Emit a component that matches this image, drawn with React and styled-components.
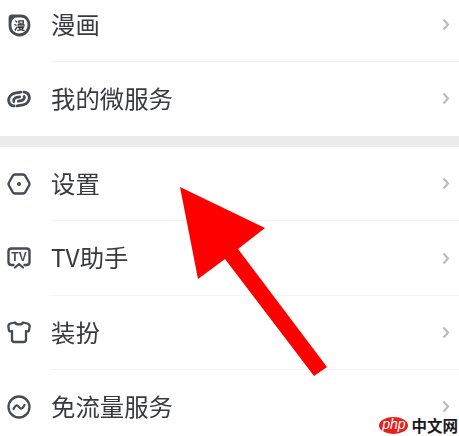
import React from "react";
import styled, { createGlobalStyle } from "styled-components";

const GlobalStyle = createGlobalStyle`
  html, body {
    margin: 0;
    padding: 0;
    background: #fff;
  }
  body {
    font-family: "Noto Sans CJK SC", "Noto Sans", sans-serif;
  }
`;

const Page = styled.div`
  position: relative;
  width: 459px;
  height: 436px;
  overflow: hidden;
  background: #fff;
`;

const List = styled.div`
  margin-top: -12px;
  filter: blur(0.35px);
`;

const Group = styled.div`
  background: #fff;
`;

const Band = styled.div`
  height: 11px;
  background: #ececec;
`;

const Row = styled.div`
  display: flex;
  align-items: center;
  height: ${(p) => p.$height}px;
  padding-left: 7px;
`;

const IconBox = styled.div`
  display: flex;
  align-items: center;
  justify-content: center;
  flex: none;
  width: 24px;
  height: 24px;
  margin-top: -1px;
  margin-right: 20px;
  color: #474c54;
`;

const RowBody = styled.div`
  flex: 1;
  display: flex;
  align-items: center;
  justify-content: space-between;
  align-self: stretch;
  padding-right: 8px;
  border-bottom: 1px solid ${(p) => (p.$last ? "transparent" : "#f3f3f3")};
`;

const Label = styled.span`
  font-size: 24.4px;
  line-height: 1;
  color: #383a3e;
  margin-top: -1px;
`;

const ChevronIcon = styled.svg`
  margin-right: 1px;
`;

const Arrow = styled.svg`
  position: absolute;
  left: 0;
  top: 0;
  pointer-events: none;
`;

const Watermark = styled.div`
  position: absolute;
  right: 1px;
  bottom: 2px;
  display: flex;
  align-items: center;
  gap: 3px;
`;

const PhpBadge = styled.div`
  width: 29px;
  height: 17px;
  border-radius: 50%;
  background: #e8201c;
  color: #fff;
  font-family: "Liberation Sans", sans-serif;
  font-style: italic;
  font-size: 14px;
  line-height: 15px;
  text-align: center;
`;

const WatermarkText = styled.span`
  font-size: 15.5px;
  line-height: 17px;
  font-weight: 700;
  color: #1a1a1a;
`;

const Chevron = () => (
  <ChevronIcon width="8" height="13" viewBox="0 0 8 13" fill="none">
    <path d="M1.5 1.5 L6 6.5 L1.5 11.5" stroke="#b9b9b9" strokeWidth="2" />
  </ChevronIcon>
);

const ComicIcon = () => (
  <svg width="24" height="24" viewBox="0 0 24 24" fill="none">
    <path
      d="M5 3 H14 C19 3 22 7 22 12 C22 17.5 18 22 12.5 22 C7 22 3 18 3 12.5 V5 C3 3.8 3.8 3 5 3 Z"
      stroke="#474c54"
      strokeWidth="2.8"
    />
    <path d="M4 4 H9 C6 5.5 4.5 8 4 11 Z" fill="#474c54" />
    <text x="12.5" y="16.5" textAnchor="middle" fontSize="11.5" fontWeight="700" fill="#33363b" fontFamily="Noto Sans CJK SC, sans-serif">
      漫
    </text>
  </svg>
);

const LinkIcon = () => (
  <svg width="24" height="24" viewBox="0 0 24 24" fill="none" stroke="currentColor" strokeWidth="2.8" strokeLinecap="round" strokeLinejoin="round">
    <g transform="rotate(-10 12 12)">
      <path d="M15 5.5 H9 C4.5 5.5 1.5 9 1.5 12.5 C1.5 15.5 3.5 17.5 6 18" />
      <path d="M9 18.5 H15 C19.5 18.5 22.5 15 22.5 11.5 C22.5 8.5 20.5 6.5 18 6" />
      <path d="M6.5 13.5 C6 11.5 8 10 10 10 H13" />
      <path d="M17.5 10.5 C18 12.5 16 14 14 14 H11" />
    </g>
  </svg>
);

const SettingsIcon = () => (
  <svg width="24" height="24" viewBox="0 0 24 24" fill="none">
    <path
      d="M8 2.5 H16 C17 2.5 17.8 3 18.3 3.8 L22 10.5 C22.6 11.5 22.6 12.5 22 13.5 L18.3 20.2 C17.8 21 17 21.5 16 21.5 H8 C7 21.5 6.2 21 5.7 20.2 L2 13.5 C1.4 12.5 1.4 11.5 2 10.5 L5.7 3.8 C6.2 3 7 2.5 8 2.5 Z"
      stroke="currentColor"
      strokeWidth="2.4"
    />
    <circle cx="12" cy="12" r="2" fill="currentColor" />
  </svg>
);

const TvIcon = () => (
  <svg width="24" height="24" viewBox="0 0 24 24" fill="none" stroke="currentColor" strokeLinecap="round" strokeLinejoin="round">
    <path d="M6.5 19 H4.5 C2.8 19 1.5 17.8 1.5 16 V5.5 C1.5 3.8 2.8 2.5 4.5 2.5 H19.5 C21.2 2.5 22.5 3.8 22.5 5.5 V16 C22.5 17.8 21.2 19 19.5 19 H17.5" strokeWidth="2.4" />
    <text x="12" y="15" textAnchor="middle" fontSize="12" fontWeight="700" fill="currentColor" stroke="none" fontFamily="Liberation Sans, sans-serif">
      TV
    </text>
    <path d="M8 21.5 L12 18 L16 21.5" strokeWidth="2.2" />
  </svg>
);

const ShirtIcon = () => (
  <svg width="24" height="24" viewBox="0 0 24 24" fill="none">
    <path
      d="M8 2.5 C9 5 15 5 16 2.5 L20.5 3.5 C22 4 23 5.5 22.5 7.5 L22 10.5 C21.8 11.5 20.5 11.5 19 11 V19.5 C19 21 18 22 16.5 22 H7.5 C6 22 5 21 5 19.5 V11 C3.5 11.5 2.2 11.5 2 10.5 L1.5 7.5 C1 5.5 2 4 3.5 3.5 Z"
      stroke="currentColor"
      strokeWidth="2.3"
      strokeLinejoin="round"
    />
  </svg>
);

const FlowIcon = () => (
  <svg width="24" height="24" viewBox="0 0 24 24" fill="none" stroke="currentColor" strokeLinecap="round" strokeLinejoin="round">
    <circle cx="12" cy="12" r="10.5" strokeWidth="2.3" />
    <path d="M6.5 14 C8 11 9.5 9.5 11 11 L13 13 C14.5 14.5 16 13 17.5 10" strokeWidth="2.2" />
  </svg>
);

const MenuRow = ({ icon, label, last, height = 74 }) => (
  <Row $height={height}>
    <IconBox>{icon}</IconBox>
    <RowBody $last={last}>
      <Label>{label}</Label>
      <Chevron />
    </RowBody>
  </Row>
);

export default function App() {
  return (
    <Page>
      <GlobalStyle />
      <List>
        <Group>
          <MenuRow icon={<ComicIcon />} label="漫画" />
          <MenuRow icon={<LinkIcon />} label="我的微服务" last />
        </Group>
        <Band />
        <Group>
          <MenuRow icon={<SettingsIcon />} label="设置" height={74.4} />
          <MenuRow icon={<TvIcon />} label="TV助手" height={74.4} />
          <MenuRow icon={<ShirtIcon />} label="装扮" height={74.4} />
          <MenuRow icon={<FlowIcon />} label="免流量服务" height={74.4} last />
        </Group>
      </List>
      <Arrow width="459" height="436" viewBox="0 0 459 436">
        <path
          d="M180 187 L265 228 L238 249 L327 367 L314 376 L225 259 L198 279 Z"
          fill="#fe0000"
        />
      </Arrow>
      <Watermark>
        <PhpBadge>php</PhpBadge>
        <WatermarkText>中文网</WatermarkText>
      </Watermark>
    </Page>
  );
}
